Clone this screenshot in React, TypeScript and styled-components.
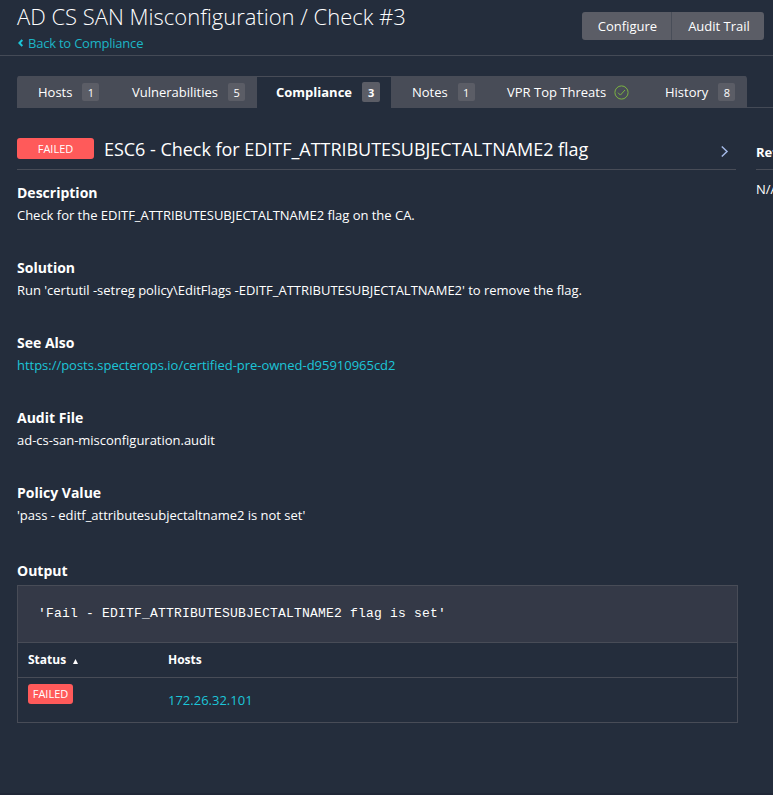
import React from "react";
import styled, { createGlobalStyle } from "styled-components";

const GlobalStyle = createGlobalStyle`
  * { box-sizing: border-box; }
  html, body { margin: 0; padding: 0; overflow: hidden; background: #242d3c; }
  body { font-family: "Open Sans", sans-serif; font-size: 13px; line-height: 20px; color: #fff; }
`;

const Page = styled.div`
  width: 773px;
  height: 795px;
  overflow: hidden;
  background: #242d3c;
  border-bottom: 2px solid #202737;
`;

const Header = styled.header`
  display: flex;
  justify-content: space-between;
  height: 56px;
  padding: 0 9px 0 17px;
  border-bottom: 1px solid #444a56;
`;

const Title = styled.h1`
  margin: 1px 0 2px;
  font-size: 22px;
  font-weight: 300;
  line-height: 30px;
  white-space: nowrap;
`;

const BackLink = styled.a`
  display: flex;
  align-items: center;
  gap: 4px;
  color: #1cb5c6;
  letter-spacing: -0.22px;
  line-height: 20px;
  white-space: nowrap;
`;

const ButtonGroup = styled.div`
  display: flex;
  height: 28px;
  margin-top: 12px;
  border-radius: 3px;
  overflow: hidden;
`;

const HeaderButton = styled.button<{ $width: number }>`
  width: ${(p) => p.$width}px;
  padding: 0 0 0 2px;
  border: 0;
  background: #5b5d66;
  color: #fff;
  font: 13px/28px "Open Sans", sans-serif;
  white-space: nowrap;
  & + & { border-left: 1px solid #484d58; }
`;

const TabRow = styled.div`
  display: flex;
  height: 32px;
  margin: 20px 0 0 17px;
`;

const TabFiller = styled.div`
  flex: 1;
  border-bottom: 1px solid #444a56;
`;

const Tabs = styled.nav`
  display: flex;
  width: 730px;
  background: #484c57;
  border-radius: 3px 3px 0 0;
  overflow: hidden;
`;

const Tab = styled.div<{ $width: number; $inset: number; $active?: boolean }>`
  display: flex;
  align-items: center;
  flex: none;
  width: ${(p) => p.$width}px;
  padding: 0 0 1px ${(p) => p.$inset}px;
  white-space: nowrap;
  font-weight: ${(p) => (p.$active ? 700 : 400)};
  background: ${(p) => (p.$active ? "#242d3c" : "transparent")};
  border-top: 1px solid #484c57;
`;

const Count = styled.span<{ $active?: boolean }>`
  display: block;
  width: ${(p) => (p.$active ? 18 : 17)}px;
  height: ${(p) => (p.$active ? 20 : 18)}px;
  margin-left: 10px;
  border-radius: 2px;
  background: #5b5d66;
  font-size: 11px;
  line-height: ${(p) => (p.$active ? 21 : 19)}px;
  text-align: center;
`;

const CheckIcon = styled.svg`
  display: block;
  margin-left: 8px;
`;

const Columns = styled.main`
  display: grid;
  grid-template-columns: 721px 200px;
  column-gap: 18px;
  padding: 19px 0 0 17px;
`;

const CheckHeader = styled.div`
  display: flex;
  width: 719px;
  height: 43px;
  border-bottom: 1px solid #484c57;
`;

const StatusBadge = styled.span<{ $large?: boolean }>`
  display: block;
  flex: none;
  width: ${(p) => (p.$large ? 77 : 45)}px;
  height: ${(p) => (p.$large ? 21 : 20)}px;
  margin-top: ${(p) => (p.$large ? 11 : 6)}px;
  border-radius: 3px;
  background: #ff5a5a;
  font-size: 11px;
  line-height: ${(p) => (p.$large ? 22 : 20)}px;
  text-align: center;
`;

const CheckName = styled.h2`
  flex: 1;
  margin: 9px 0 0 10px;
  font-size: 18px;
  font-weight: 400;
  letter-spacing: -0.03px;
  line-height: 26px;
  white-space: nowrap;
`;

const NextIcon = styled.svg`
  display: block;
  margin: 18px 7px 0 0;
`;

const Section = styled.section`
  height: 75px;
  padding-top: 12px;
  white-space: nowrap;
`;

const SectionTitle = styled.h3`
  margin: 0;
  font-size: 14px;
  font-weight: 700;
  line-height: 21px;
`;

const Body = styled.p`
  margin: 2px 0 0;
  letter-spacing: -0.02px;
  line-height: 20px;
`;

const Link = styled.a`
  color: #1cc5d8;
`;

const Output = styled.section`
  padding-top: 15px;
`;

const OutputPanel = styled.div`
  margin-top: 4px;
  border: 1px solid #484c57;
`;

const OutputText = styled.pre`
  height: 57px;
  margin: 0;
  padding: 18px 20px 0;
  border-bottom: 1px solid #484c57;
  background: #343947;
  font: 13px/20px "Liberation Mono", monospace;
  letter-spacing: 0.2px;
`;

const TableRow = styled.div<{ $head?: boolean }>`
  display: grid;
  grid-template-columns: 140px 1fr;
  height: ${(p) => (p.$head ? 35 : 44)}px;
  padding-left: 10px;
  border-bottom: ${(p) => (p.$head ? "1px solid #484c57" : "0")};
  font-size: ${(p) => (p.$head ? 12 : 13)}px;
  font-weight: ${(p) => (p.$head ? 700 : 400)};
  line-height: ${(p) => (p.$head ? 33 : 44)}px;
`;

const HeadCell = styled.div`
  display: flex;
  align-items: center;
  height: 33px;
`;

const SortIcon = styled.svg`
  margin: 3px 0 0 7px;
`;

const Aside = styled.aside`
  white-space: nowrap;
`;

const AsideTitle = styled.h3`
  height: 43px;
  margin: 0;
  padding-top: 15px;
  border-bottom: 1px solid #484c57;
  font-size: 13px;
  line-height: 20px;
`;

const AsideText = styled.p`
  margin: 9px 0 0;
`;

type TabItem = { label: string; width: number; inset: number; count?: number; active?: boolean };

const tabs: TabItem[] = [
  { label: "Hosts", width: 94, inset: 21, count: 1 },
  { label: "Vulnerabilities", width: 146, inset: 21, count: 5 },
  { label: "Compliance", width: 134, inset: 19, count: 3, active: true },
  { label: "Notes", width: 95, inset: 21, count: 1 },
  { label: "VPR Top Threats", width: 158, inset: 21 },
  { label: "History", width: 103, inset: 21, count: 8 },
];

const sections = [
  { title: "Description", text: "Check for the EDITF_ATTRIBUTESUBJECTALTNAME2 flag on the CA." },
  {
    title: "Solution",
    text: "Run 'certutil -setreg policy\\EditFlags -EDITF_ATTRIBUTESUBJECTALTNAME2' to remove the flag.",
  },
  { title: "See Also", text: "https://posts.specterops.io/certified-pre-owned-d95910965cd2", link: true },
  { title: "Audit File", text: "ad-cs-san-misconfiguration.audit" },
  { title: "Policy Value", text: "'pass - editf_attributesubjectaltname2 is not set'" },
];

export default function App() {
  return (
    <>
      <GlobalStyle />
      <Page>
        <Header>
          <div>
            <Title>AD CS SAN Misconfiguration / Check #3</Title>
            <BackLink>
              <svg width="7" height="8" viewBox="0 0 7 8" fill="none">
                <path d="M5.3 1 2.4 4l2.9 3" stroke="#1cc5d8" strokeWidth="2" />
              </svg>
              Back to Compliance
            </BackLink>
          </div>
          <ButtonGroup>
            <HeaderButton $width={89}>Configure</HeaderButton>
            <HeaderButton $width={93}>Audit Trail</HeaderButton>
          </ButtonGroup>
        </Header>
        <TabRow>
          <Tabs>
            {tabs.map((t) => (
              <Tab key={t.label} $width={t.width} $inset={t.inset} $active={t.active}>
                {t.label}
                {t.count !== undefined ? (
                  <Count $active={t.active}>{t.count}</Count>
                ) : (
                  <CheckIcon width="15" height="15" viewBox="0 0 15 15" fill="none" stroke="#7cb342">
                    <circle cx="7.5" cy="7.5" r="6.6" />
                    <path d="M4 7.7 6.4 10.1 11 5" />
                  </CheckIcon>
                )}
              </Tab>
            ))}
          </Tabs>
          <TabFiller />
        </TabRow>
        <Columns>
          <div>
            <CheckHeader>
              <StatusBadge $large>FAILED</StatusBadge>
              <CheckName>ESC6 - Check for EDITF_ATTRIBUTESUBJECTALTNAME2 flag</CheckName>
              <NextIcon width="9" height="13" viewBox="0 0 9 13" fill="none" stroke="#a3b8e6" strokeWidth="1.5">
                <path d="M1.8 1.5 7 6.5l-5.2 5" />
              </NextIcon>
            </CheckHeader>
            {sections.map((s) => (
              <Section key={s.title}>
                <SectionTitle>{s.title}</SectionTitle>
                <Body>{s.link ? <Link>{s.text}</Link> : s.text}</Body>
              </Section>
            ))}
            <Output>
              <SectionTitle>Output</SectionTitle>
              <OutputPanel>
                <OutputText>'Fail - EDITF_ATTRIBUTESUBJECTALTNAME2 flag is set'</OutputText>
                <TableRow $head>
                  <HeadCell>
                    Status
                    <SortIcon width="5" height="5" viewBox="0 0 5 5" fill="#fff">
                      <path d="M2.5 0 5 5H0Z" />
                    </SortIcon>
                  </HeadCell>
                  <HeadCell>Hosts</HeadCell>
                </TableRow>
                <TableRow>
                  <StatusBadge>FAILED</StatusBadge>
                  <Link>172.26.32.101</Link>
                </TableRow>
              </OutputPanel>
            </Output>
          </div>
          <Aside>
            <AsideTitle>Reference Information</AsideTitle>
            <AsideText>N/A</AsideText>
          </Aside>
        </Columns>
      </Page>
    </>
  );
}
